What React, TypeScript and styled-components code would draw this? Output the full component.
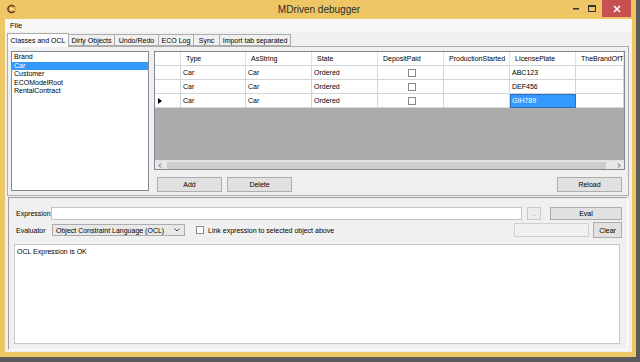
import React from "react";
import styled, { createGlobalStyle } from "styled-components";

const GlobalStyle = createGlobalStyle`
  html, body { margin: 0; padding: 0; width: 640px; height: 362px; overflow: hidden; background: #5a5a5a; }
  body { font-family: "Liberation Sans", Arial, sans-serif; font-size: 7px; color: #000; }
  * { box-sizing: border-box; }
`;

const Window = styled.div`
  width: 636px;
  height: 357px;
  background: #efc666;
  display: flex;
  flex-direction: column;
`;

const TitleBar = styled.div`
  height: 19px;
  display: grid;
  grid-template-columns: 1fr auto 1fr;
  align-items: start;
`;

const AppIcon = styled.div`
  padding: 4px 0 0 7px;
  height: 19px;
`;

const Title = styled.div`
  font-size: 10px;
  line-height: 19px;
  color: #2b2b2b;
  padding-left: 2px;
`;

const Controls = styled.div`
  display: flex;
  justify-content: flex-end;
  padding-right: 5px;
  gap: 0;
`;

const ControlButton = styled.div<{ $w: number; $bg?: string; $ml?: number }>`
  width: ${(p) => p.$w}px;
  height: 17px;
  margin-left: ${(p) => p.$ml ?? 0}px;
  background: ${(p) => p.$bg ?? "transparent"};
  display: flex;
  align-items: center;
  justify-content: center;
`;

const FrameBody = styled.div`
  flex: 1;
  padding: 0 4px 5px 5px;
  display: flex;
`;

const Client = styled.div`
  flex: 1;
  background: #f0f0f0;
  display: flex;
  flex-direction: column;
`;

const MenuBar = styled.div`
  height: 13px;
  background: #f7f7f7;
  padding-left: 5px;
  line-height: 13px;
  font-size: 7.5px;
`;

const TabStrip = styled.div`
  height: 13px;
  margin-top: 1px;
  padding-left: 2px;
  display: flex;
  align-items: flex-end;
`;

const Tab = styled.div<{ $w: number; $active?: boolean }>`
  width: ${(p) => p.$w}px;
  height: ${(p) => (p.$active ? 14 : 12)}px;
  margin-bottom: ${(p) => (p.$active ? -1 : 0)}px;
  margin-right: -1px;
  border: 1px solid #acacac;
  border-bottom: ${(p) => (p.$active ? "none" : "1px solid #acacac")};
  background: ${(p) => (p.$active ? "#fcfcfc" : "#f0f0f0")};
  display: flex;
  align-items: center;
  justify-content: center;
  white-space: nowrap;
  position: relative;
  z-index: ${(p) => (p.$active ? 2 : 1)};
`;

const TabPage = styled.div`
  height: 150px;
  margin: 0 3px 0 2px;
  border: 1px solid #acacac;
  background: #f0f0f0;
  padding: 4px 3px 3px 3px;
  display: flex;
  gap: 5px;
`;

const ClassList = styled.div`
  width: 138px;
  margin-bottom: 1px;
  background: #fff;
  border: 1px solid #828790;
  padding-top: 1px;
`;

const ListItem = styled.div<{ $selected?: boolean }>`
  height: 8.6px;
  line-height: 8.6px;
  padding-left: 2px;
  background: ${(p) => (p.$selected ? "#3399ff" : "transparent")};
  color: ${(p) => (p.$selected ? "#fff" : "#000")};
`;

const RightColumn = styled.div`
  flex: 1;
  display: flex;
  flex-direction: column;
`;

const GridFrame = styled.div`
  height: 119px;
  border: 1px solid #828790;
  background: #ababab;
  display: flex;
  flex-direction: column;
`;

const GridRow = styled.div`
  display: grid;
  grid-template-columns: 26px 65px 66px 66px 66px 66px 66px 1fr;
  height: 14px;
  background: #fff;
`;

const HeaderCell = styled.div`
  border-right: 1px solid #e3e3e3;
  border-bottom: 1px solid #d5d5d5;
  padding-left: 5px;
  line-height: 13px;
  white-space: nowrap;
  overflow: hidden;
`;

const Cell = styled.div<{ $selected?: boolean; $center?: boolean }>`
  border-right: 1px solid #d5d5d5;
  border-bottom: 1px solid #d5d5d5;
  padding-left: 2px;
  line-height: 13px;
  white-space: nowrap;
  overflow: hidden;
  display: flex;
  align-items: center;
  justify-content: ${(p) => (p.$center ? "center" : "flex-start")};
  background: ${(p) => (p.$selected ? "#3399ff" : "#fff")};
  color: ${(p) => (p.$selected ? "#fff" : "#000")};
  outline: ${(p) => (p.$selected ? "1px solid #2a6fc0" : "none")};
  outline-offset: -1px;
`;

const RowHeader = styled.div`
  border-right: 1px solid #d5d5d5;
  border-bottom: 1px solid #d5d5d5;
  display: flex;
  align-items: center;
  padding-left: 3px;
`;

const CheckBox = styled.div`
  width: 8px;
  height: 8px;
  border: 1px solid #8a8a8a;
  background: #fff;
`;

const GridEmpty = styled.div`
  flex: 1;
`;

const HScroll = styled.div`
  height: 9px;
  background: #e8e8e8;
  display: flex;
  align-items: center;
  border-top: 1px solid #e0e0e0;
`;

const ScrollArrow = styled.div`
  width: 10px;
  height: 8px;
  display: flex;
  align-items: center;
  justify-content: center;
`;

const ScrollThumb = styled.div`
  flex: 1;
  height: 7px;
  background: #cdcdcd;
  margin: 0 8px 0 2px;
`;

const ButtonRow = styled.div`
  display: flex;
  margin-top: 7px;
  padding: 0 3px;
  gap: 5px;
`;

const Button = styled.div<{ $w: number; $h?: number; $push?: boolean }>`
  width: ${(p) => p.$w}px;
  height: ${(p) => p.$h ?? 15}px;
  margin-left: ${(p) => (p.$push ? "auto" : "0")};
  background: #e1e1e1;
  border: 1px solid #adadad;
  display: flex;
  align-items: center;
  justify-content: center;
  flex-shrink: 0;
`;

const BottomPanel = styled.div`
  flex: 1;
  margin: 1px 4px 2px 3px;
  border-top: 1px solid #a0a0a0;
  border-left: 1px solid #a0a0a0;
  border-right: 1px solid #ffffff;
  border-bottom: 1px solid #ffffff;
  padding: 9px 5px 5px 6px;
  display: flex;
  flex-direction: column;
`;

const FormRow = styled.div<{ $h: number; $mt?: number }>`
  height: ${(p) => p.$h}px;
  margin-top: ${(p) => p.$mt ?? 0}px;
  display: flex;
  align-items: center;
`;

const Label = styled.div<{ $w: number }>`
  width: ${(p) => p.$w}px;
  padding-left: 1px;
  flex-shrink: 0;
`;

const TextInput = styled.div`
  flex: 1;
  height: 13px;
  background: #fff;
  border: 1px solid #c3c3c3;
`;

const SmallButton = styled.div`
  width: 14px;
  height: 13px;
  margin: 0 9px 0 5px;
  border: 1px solid #c8c8c8;
  background: #ececec;
  color: #9a9a9a;
  display: flex;
  align-items: center;
  justify-content: center;
  font-size: 6px;
`;

const Combo = styled.div`
  width: 133px;
  height: 12px;
  background: #e8e8e8;
  border: 1px solid #acacac;
  display: flex;
  align-items: center;
  justify-content: space-between;
  padding: 0 4px 0 3px;
  flex-shrink: 0;
`;

const CheckLabel = styled.div`
  display: flex;
  align-items: center;
  gap: 4px;
  margin-left: 11px;
  white-space: nowrap;
`;

const Spacer = styled.div`
  flex: 1;
`;

const DisabledBox = styled.div`
  width: 75px;
  height: 14px;
  margin-right: 4px;
  background: #f0f0f0;
  border: 1px solid #cfcfcf;
`;

const OutputArea = styled.div`
  flex: 1;
  margin: 6px 2px 0 -1px;
  background: #fff;
  border: 1px solid #c8c8c8;
  padding: 3px 2px;
`;

const columns = ["Type", "AsString", "State", "DepositPaid", "ProductionStarted", "LicensePlate", "TheBrandOfT"];

const rows = [
  { plate: "ABC123", current: false },
  { plate: "DEF456", current: false },
  { plate: "GIH789", current: true },
];

const tabs = [
  { label: "Classes and OCL", w: 62, active: true },
  { label: "Dirty Objects", w: 47 },
  { label: "Undo/Redo", w: 45 },
  { label: "ECO Log", w: 36 },
  { label: "Sync", w: 27 },
  { label: "Import tab separated", w: 72 },
];

const classes = ["Brand", "Car", "Customer", "ECOModelRoot", "RentalContract"];

export default function App() {
  return (
    <>
      <GlobalStyle />
      <Window>
        <TitleBar>
          <AppIcon>
            <svg width="9" height="10" viewBox="0 0 9 10">
              <circle cx="4.5" cy="5" r="3.6" fill="#f5a623" stroke="#3a3a3a" strokeWidth="1.4" />
              <path d="M6.4 3.6 L8.6 2.6 L8.6 7.4 L6.4 6.4 Z" fill="#efc666" />
              <circle cx="4.5" cy="5" r="1.3" fill="#fff3c0" />
            </svg>
          </AppIcon>
          <Title>MDriven debugger</Title>
          <Controls>
            <ControlButton $w={16}>
              <svg width="6" height="2"><rect x="0" y="0" width="6" height="1.5" fill="#333" /></svg>
            </ControlButton>
            <ControlButton $w={16}>
              <svg width="8" height="7"><rect x="0.5" y="0.5" width="7" height="6" fill="none" stroke="#333" strokeWidth="1" /><rect x="0.5" y="0.5" width="7" height="1.5" fill="#333" /></svg>
            </ControlButton>
            <ControlButton $w={29} $bg="#c75050" $ml={2}>
              <svg width="8" height="8"><path d="M1 1 L7 7 M7 1 L1 7" stroke="#fff" strokeWidth="1.6" /></svg>
            </ControlButton>
          </Controls>
        </TitleBar>
        <FrameBody>
          <Client>
            <MenuBar>File</MenuBar>
            <TabStrip>
              {tabs.map((t) => (
                <Tab key={t.label} $w={t.w} $active={t.active}>
                  {t.label}
                </Tab>
              ))}
            </TabStrip>
            <TabPage>
              <ClassList>
                {classes.map((c) => (
                  <ListItem key={c} $selected={c === "Car"}>
                    {c}
                  </ListItem>
                ))}
              </ClassList>
              <RightColumn>
                <GridFrame>
                  <GridRow>
                    <HeaderCell />
                    {columns.map((c) => (
                      <HeaderCell key={c}>{c}</HeaderCell>
                    ))}
                  </GridRow>
                  {rows.map((r) => (
                    <GridRow key={r.plate}>
                      <RowHeader>
                        {r.current && (
                          <svg width="4" height="6"><path d="M0 0 L4 3 L0 6 Z" fill="#000" /></svg>
                        )}
                      </RowHeader>
                      <Cell>Car</Cell>
                      <Cell>Car</Cell>
                      <Cell>Ordered</Cell>
                      <Cell $center>
                        <CheckBox />
                      </Cell>
                      <Cell />
                      <Cell $selected={r.current}>{r.plate}</Cell>
                      <Cell />
                    </GridRow>
                  ))}
                  <GridEmpty />
                  <HScroll>
                    <ScrollArrow>
                      <svg width="4" height="5"><path d="M3 0.5 L1 2.5 L3 4.5" stroke="#555" fill="none" /></svg>
                    </ScrollArrow>
                    <ScrollThumb />
                    <ScrollArrow>
                      <svg width="4" height="5"><path d="M1 0.5 L3 2.5 L1 4.5" stroke="#555" fill="none" /></svg>
                    </ScrollArrow>
                  </HScroll>
                </GridFrame>
                <ButtonRow>
                  <Button $w={65}>Add</Button>
                  <Button $w={65}>Delete</Button>
                  <Button $w={65} $push>
                    Reload
                  </Button>
                </ButtonRow>
              </RightColumn>
            </TabPage>
            <BottomPanel>
              <FormRow $h={13}>
                <Label $w={36}>Expression</Label>
                <TextInput />
                <SmallButton>...</SmallButton>
                <Button $w={72} $h={13}>
                  Eval
                </Button>
              </FormRow>
              <FormRow $h={16} $mt={2}>
                <Label $w={37}>Evaluator</Label>
                <Combo>
                  <span>Object Constraint Language (OCL)</span>
                  <svg width="6" height="4"><path d="M0.5 0.5 L3 3 L5.5 0.5" stroke="#444" fill="none" /></svg>
                </Combo>
                <CheckLabel>
                  <CheckBox />
                  <span>Link expression to selected object above</span>
                </CheckLabel>
                <Spacer />
                <DisabledBox />
                <Button $w={29} $h={16}>
                  Clear
                </Button>
              </FormRow>
              <OutputArea>OCL Expression is OK</OutputArea>
            </BottomPanel>
          </Client>
        </FrameBody>
      </Window>
    </>
  );
}
